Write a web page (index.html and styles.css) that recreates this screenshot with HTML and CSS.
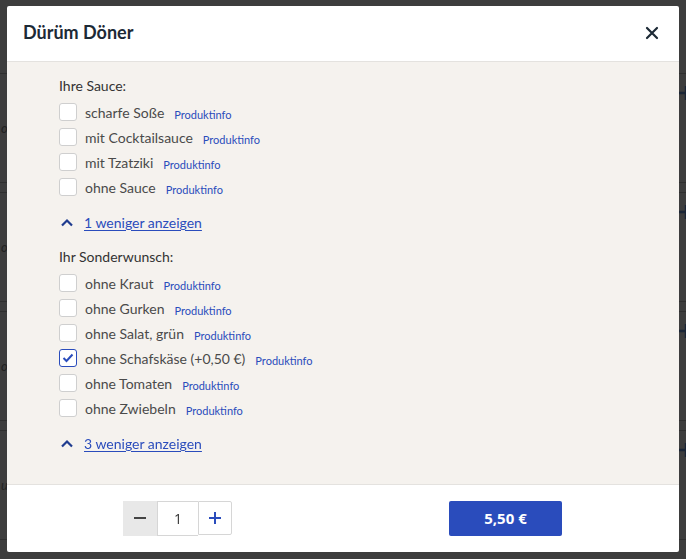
FILE: index.html
```html
<!DOCTYPE html>
<html lang="de">
<head>
  <meta charset="UTF-8" />
  <meta name="viewport" content="width=device-width, initial-scale=1.0"/>
  <title>Dürüm Döner</title>
  <link rel="stylesheet" href="styles.css">
</head>
<body>
  <!-- menu list behind the dialog -->
  <div class="menu">
    <div class="menu-item"><i>o</i><svg class="add" width="14" height="14" viewBox="0 0 14 14"><path d="M0 7 H14 M7 0 V14" stroke="#1a2536" stroke-width="2.4"/></svg></div>
    <div class="menu-item"><i>o</i><svg class="add" width="14" height="14" viewBox="0 0 14 14"><path d="M0 7 H14 M7 0 V14" stroke="#1a2536" stroke-width="2.4"/></svg></div>
    <div class="menu-item"><i>o</i><svg class="add" width="14" height="14" viewBox="0 0 14 14"><path d="M0 7 H14 M7 0 V14" stroke="#1a2536" stroke-width="2.4"/></svg></div>
    <div class="menu-item"><i>u</i><svg class="add" width="14" height="14" viewBox="0 0 14 14"><path d="M0 7 H14 M7 0 V14" stroke="#1a2536" stroke-width="2.4"/></svg></div>
  </div>

  <div class="overlay">
    <div class="modal">
      <div class="modal-head">
        <h2>Dürüm Döner</h2>
        <button class="close" aria-label="Schließen">
          <svg width="14" height="14" viewBox="0 0 14 14"><path d="M2 2 L12 12 M12 2 L2 12" stroke="#1d2a36" stroke-width="2.2" stroke-linecap="round"/></svg>
        </button>
      </div>

      <div class="modal-body">
        <div class="group">
          <div class="group-title">Ihre Sauce:</div>
          <label class="option"><span class="box"></span><span class="name">scharfe Soße</span><a class="info">Produktinfo</a></label>
          <label class="option"><span class="box"></span><span class="name">mit Cocktailsauce</span><a class="info">Produktinfo</a></label>
          <label class="option"><span class="box"></span><span class="name">mit Tzatziki</span><a class="info">Produktinfo</a></label>
          <label class="option"><span class="box"></span><span class="name">ohne Sauce</span><a class="info">Produktinfo</a></label>
          <a class="less">
            <svg width="14" height="9" viewBox="0 0 14 9"><path d="M2 7.5 L7 2.5 L12 7.5" fill="none" stroke="#1f3c8f" stroke-width="2.2"/></svg>
            <span>1 weniger anzeigen</span>
          </a>
        </div>

        <div class="group">
          <div class="group-title">Ihr Sonderwunsch:</div>
          <label class="option"><span class="box"></span><span class="name">ohne Kraut</span><a class="info">Produktinfo</a></label>
          <label class="option"><span class="box"></span><span class="name">ohne Gurken</span><a class="info">Produktinfo</a></label>
          <label class="option"><span class="box"></span><span class="name">ohne Salat, grün</span><a class="info">Produktinfo</a></label>
          <label class="option checked">
            <span class="box">
              <svg width="12" height="10" viewBox="0 0 12 10"><path d="M1.5 5 L4.5 8 L10.5 1.5" fill="none" stroke="#2a4cbc" stroke-width="2"/></svg>
            </span>
            <span class="name">ohne Schafskäse (+0,50 €)</span><a class="info">Produktinfo</a>
          </label>
          <label class="option"><span class="box"></span><span class="name">ohne Tomaten</span><a class="info">Produktinfo</a></label>
          <label class="option"><span class="box"></span><span class="name">ohne Zwiebeln</span><a class="info">Produktinfo</a></label>
          <a class="less">
            <svg width="14" height="9" viewBox="0 0 14 9"><path d="M2 7.5 L7 2.5 L12 7.5" fill="none" stroke="#1f3c8f" stroke-width="2.2"/></svg>
            <span>3 weniger anzeigen</span>
          </a>
        </div>
      </div>

      <div class="modal-foot">
        <div class="stepper">
          <button class="step minus">
            <svg width="14" height="14" viewBox="0 0 14 14"><path d="M1 7 H13" stroke="#444" stroke-width="2"/></svg>
          </button>
          <div class="qty">1</div>
          <button class="step plus">
            <svg width="14" height="14" viewBox="0 0 14 14"><path d="M1 7 H13 M7 1 V13" stroke="#2a4cbc" stroke-width="2"/></svg>
          </button>
        </div>
        <button class="price">5,50 €</button>
      </div>
    </div>
  </div>
</body>
</html>
```

FILE: styles.css
```css
:root {
  --shade: #3d3d3d;
  --sand: #f5f2ee;
  --line: #e4e2df;
  --blue: #2a4cbc;
  --ink: #1d2a36;
  --text: #4a4a4a;
}

body {
  margin: 0;
  background-color: var(--shade);
  font-family: Lato, "Noto Sans", sans-serif;
  height: 559px;
  overflow: hidden;
}

/* page behind the overlay */
.menu {
  padding-top: 73px;
}

.menu-item {
  height: 108px;
  margin-bottom: 9px;
  border-top: 1px solid #2f2f2f;
  border-bottom: 1px solid #2f2f2f;
  position: relative;
}

.menu-item i {
  position: absolute;
  left: 1px;
  top: 46px;
  color: #222;
  font-size: 13px;
}

.menu-item .add {
  position: absolute;
  right: -7px;
  top: 12px;
}

.overlay {
  position: fixed;
  inset: 0;
  display: flex;
  justify-content: center;
  align-items: center;
}

.modal {
  width: 672px;
  height: 546px;
  background: #fff;
  border-radius: 2px;
  display: flex;
  flex-direction: column;
  margin-top: -2px;
}

.modal-head {
  height: 55px;
  border-bottom: 1px solid var(--line);
  display: flex;
  align-items: center;
  justify-content: space-between;
  padding: 0 20px 0 16px;
  flex-shrink: 0;
}

.modal-head h2 {
  margin: 0;
  font-size: 18px;
  font-weight: 700;
  color: var(--ink);
  font-family: Lato, sans-serif;
  position: relative;
  top: -1px;
}

.close {
  border: none;
  background: none;
  padding: 0;
  display: flex;
  cursor: pointer;
}

.modal-body {
  flex: 1;
  background: var(--sand);
  padding: 14px 52px 0;
}

.group {
  margin-bottom: 14px;
}

.group-title {
  font-size: 14px;
  color: #333;
  height: 20px;
  line-height: 20px;
  margin-bottom: 4px;
}

.option {
  display: flex;
  align-items: center;
  height: 25px;
  font-size: 14px;
  color: var(--text);
}

.box {
  width: 18px;
  height: 18px;
  box-sizing: border-box;
  border: 1px solid #cfcfcf;
  border-radius: 3px;
  background: #fff;
  margin-right: 8px;
  display: flex;
  align-items: center;
  justify-content: center;
}

.checked .box {
  border-color: var(--blue);
}

.info {
  font-size: 11px;
  color: var(--blue);
  margin-left: 10px;
  position: relative;
  top: 2px;
}

.less {
  display: flex;
  align-items: center;
  margin-top: 13px;
  height: 20px;
  font-size: 14px;
  color: var(--blue);
}

.less svg {
  margin: 0 10px 0 1px;
}

.less span {
  text-decoration: underline;
  text-underline-offset: 2px;
}

.modal-foot {
  height: 67px;
  border-top: 1px solid var(--line);
  display: flex;
  align-items: center;
  justify-content: space-between;
  padding: 0 117px 0 116px;
  flex-shrink: 0;
}

.stepper {
  display: flex;
  height: 35px;
}

.step {
  width: 34px;
  height: 35px;
  border: none;
  padding: 0;
  display: flex;
  align-items: center;
  justify-content: center;
}

.minus {
  background: #e8e8e8;
}

.plus {
  background: #fff;
  border: 1px solid #d6d6d6;
  border-radius: 0 2px 2px 0;
  height: 34px;
}

.qty {
  width: 41px;
  box-sizing: border-box;
  border: 1px solid #d6d6d6;
  border-right: none;
  display: flex;
  align-items: center;
  justify-content: center;
  font-size: 14px;
  color: #333;
  font-family: "Open Sans", sans-serif;
}

.price {
  width: 113px;
  height: 35px;
  border: none;
  border-radius: 2px;
  background: var(--blue);
  color: #fff;
  font-weight: 700;
  font-size: 15px;
  font-family: "Open Sans", sans-serif;
}
```
